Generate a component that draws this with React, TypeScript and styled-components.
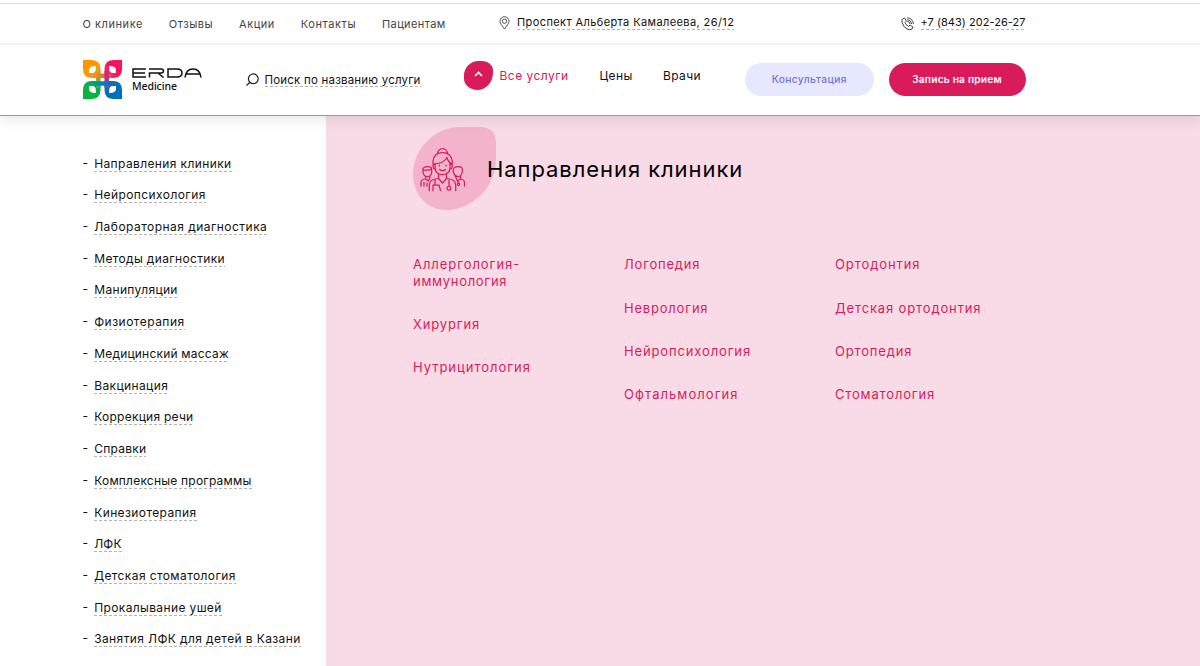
import React from "react";
import styled, { createGlobalStyle } from "styled-components";

const Global = createGlobalStyle`
  * { box-sizing: border-box; }
  body { margin: 0; background: #fff; overflow: hidden; font-family: Inter, "Open Sans", sans-serif; color: #111; }
  a { color: inherit; text-decoration: none; }
`;
const Page = styled.div`height: 666px; display: flex; flex-direction: column; overflow: hidden;`;
const TopBar = styled.div`
  margin-top: 3px; border-top: 1px solid #ddd; border-bottom: 2px solid #f3f3f3;
  display: flex; flex: none; height: 42px; padding-left: 82.5px; align-items: flex-start;
`;
const TopNav = styled.nav`display: flex; gap: 25.8px; width: 416.5px; padding-top: 12px;`;
const T = styled.a<{ $ls?: number }>`white-space: nowrap; letter-spacing: ${p => p.$ls ?? 0}px;`;
const TopLink = styled(T)`font-size: 11px; line-height: 16px; color: #444;`;
const Contact = styled.div<{ $w: number }>`
  display: flex; width: ${p => p.$w}px; padding-top: 11px; gap: 7px;
  svg { flex: none; }
`;
const dashed = `background: repeating-linear-gradient(90deg, #b4b4b4 0 3px, transparent 3px 5px) left bottom / 100% 1px no-repeat;`;
const ContactLink = styled(T)`font-size: 11px; line-height: 14px; height: 15px; ${dashed}`;
const Header = styled.header`
  height: 71px; flex: none; border-bottom: 1px solid #999; display: flex; padding-left: 82.5px;
  box-shadow: 0 3px 14px rgba(0,0,0,.1); clip-path: inset(0 0 -20px 0); position: relative; z-index: 1; background: #fff;
`;
const Logo = styled.div`display: flex; width: 163px; padding-top: 15px; gap: 10.5px;`;
const LogoText = styled.div`padding-top: 8px; width: 70px; svg { display: block; }`;
const Medicine = styled.div`font: 500 10.5px/14px "Noto Sans", sans-serif; margin-top: 1px; letter-spacing: -.1px;`;
const Search = styled.div`display: flex; width: 218.5px; gap: 6px; padding-top: 28px;`;
const SearchLink = styled(T)`font-size: 11.5px; line-height: 14px; height: 14px; ${dashed}`;
const Menu = styled.nav`display: flex; width: 281px; padding-top: 16px;`;
const Blob = styled.div`
  width: 29px; height: 29px; background: #da1b5b; border-radius: 55% 40% 60% 50% / 55% 35% 65% 45%;
  display: flex; align-items: center; justify-content: center; margin-right: 6.5px; padding-bottom: 3px;
`;
const MenuLink = styled(T)<{ $w: number; $on?: boolean }>`
  font-size: 12px; line-height: 29px; width: ${p => p.$w}px; color: ${p => (p.$on ? "#da1b5b" : "#111")};
`;
const Button = styled.button<{ $main?: boolean }>`
  border: 0; margin: 18px 15px 0 0; height: 33px; border-radius: 17px; width: ${p => (p.$main ? 137 : 128.5)}px;
  background: ${p => (p.$main ? "#da1b5b" : "#e6e8ff")}; color: ${p => (p.$main ? "#fff" : "#7674d8")};
  font: ${p => (p.$main ? 600 : 500)} 10.2px Inter, sans-serif; padding: 0 0 1px; white-space: nowrap; letter-spacing: ${p => (p.$main ? .2 : .4)}px;
`;
const Main = styled.main`display: flex; flex: 1;`;
const Side = styled.ul`width: 326px; margin: 0; padding: 31.6px 0 0 82.5px; list-style: none;`;
const SideItem = styled.li`
  height: 31.73px; display: flex; font-size: 12px; line-height: 17px; padding-top: 7px;
  &::before { content: "-"; width: 11.7px; line-height: 15px; }
`;
const SideLink = styled(T)`height: 17px; ${dashed}`;
const Panel = styled.section`flex: 1; background: #f9dbe7; padding: 11.4px 0 0 87px;`;
const Title = styled.div`display: flex; height: 84px;`;
const Badge = styled.div`width: 74px; svg { display: block; overflow: visible; }`;
const H1 = styled.h1`font-size: 22px; line-height: 32px; font-weight: 400; margin: 25.6px 0 0; color: #000; letter-spacing: .93px; position: relative;`;
const Columns = styled.div`display: flex; padding-top: 44.9px;`;
const Column = styled.div`width: 211px; display: flex; flex-direction: column; gap: 26.8px;`;
const ServiceItem = styled.div`display: flex; flex-direction: column;`;
const Service = styled(T)`font-size: 13px; line-height: 16.5px; color: #da1b5b;`;

const petals: [string, string][] = [
  ["petalOrange", ""],
  ["petalRed", "translate(39 0) scale(-1 1)"],
  ["petalBlue", "translate(39 39) scale(-1 -1)"],
  ["petalGreen", "translate(0 39) scale(1 -1)"],
];
const strandGradient = { gradientUnits: "userSpaceOnUse" as const };
const LogoMark = () => (
  <svg width="39" height="39" viewBox="0 0 39 39">
    <defs>
      <linearGradient id="petalOrange" x1="0" y1="0" x2="1" y2="1"><stop offset=".45" stopColor="#ff9800" /><stop offset="1" stopColor="#d5a52c" /></linearGradient>
      <linearGradient id="petalRed" x1="0" y1="0" x2="1" y2="1"><stop offset=".45" stopColor="#fa1060" /><stop offset="1" stopColor="#f04050" /></linearGradient>
      <linearGradient id="petalGreen" x1="0" y1="0" x2="1" y2="1"><stop offset=".45" stopColor="#08b43c" /><stop offset="1" stopColor="#089a80" /></linearGradient>
      <linearGradient id="petalBlue" x1="0" y1="0" x2="1" y2="1"><stop offset=".45" stopColor="#0070bd" /><stop offset="1" stopColor="#3468b4" /></linearGradient>
      <linearGradient id="strandLeft" {...strandGradient} x1="0" y1="9" x2="0" y2="30"><stop stopColor="#dfa428" /><stop offset="1" stopColor="#28ad48" /></linearGradient>
      <linearGradient id="strandRight" {...strandGradient} x1="0" y1="9" x2="0" y2="30"><stop stopColor="#f21a62" /><stop offset="1" stopColor="#6a58a8" /></linearGradient>
      <linearGradient id="strandTop" {...strandGradient} x1="9" y1="0" x2="29" y2="0"><stop stopColor="#f59b18" /><stop offset="1" stopColor="#f84050" /></linearGradient>
      <linearGradient id="strandBottom" {...strandGradient} x1="9" y1="0" x2="29" y2="0"><stop stopColor="#08a068" /><stop offset=".5" stopColor="#087fc0" /><stop offset="1" stopColor="#0070bd" /></linearGradient>
    </defs>
    {petals.map(([id, transform]) => (
      <path key={id} transform={transform} fillRule="evenodd" fill={`url(#${id})`} d="M0 0H8Q17.500 0 17.500 9V18H9Q0 18 0 9ZM6 13V10Q6 6 12.800 6V9Q12.800 13 9 13Z" />
    ))}
    <path d="M15.300 11V28" stroke="url(#strandLeft)" strokeWidth="4.500" />
    <path d="M11 15.800H28" stroke="url(#strandTop)" strokeWidth="4.500" />
    <path d="M23.700 11V28" stroke="url(#strandRight)" strokeWidth="4.500" />
    <path d="M11 23.500H28" stroke="url(#strandBottom)" strokeWidth="4.500" />
  </svg>
);
const Erda = () => (
  <svg width="70" height="10" viewBox="0 0 70 10" fill="none" stroke="#111" strokeWidth="1.500">
    <path d="M14 1H1V9H14M1 5H13" /><path d="M17.500 9.500V5H29Q31.500 5 31.500 3T29 1H17M26 5L31.500 9.500" />
    <path d="M36 1H45Q50 1 50 5T45 9H36Z" /><path d="M53 9.500Q54 1 61 1T69 9.500M54 6H68" />
  </svg>
);
const Pin = () => (
  <svg width="11" height="14" viewBox="0 0 11 14" fill="none" stroke="#444" strokeWidth=".9" style={{ marginTop: 1 }}>
    <path d="M5.500 13C3 9.500 1 7.500 1 5.200A4.500 4.500 0 0 1 10 5.200C10 7.500 8 9.500 5.500 13Z" /><circle cx="5.500" cy="5.200" r="2.200" />
  </svg>
);
const Phone = () => (
  <svg width="13" height="14" viewBox="0 0 13 14" fill="none" stroke="#333" strokeWidth=".9" style={{ marginTop: 2 }}>
    <path d="M1.500 2L3.500 1L5.500 4L4 5.500Q5 8 7.500 9.500L9 8L12 10L11 12Q9 13.500 6 12Q2 10 1 5Q.5 3 1.500 2Z" />
    <path d="M6.300 4.200Q8.600 4.600 9 7M6.200 2.500Q10 3 10.700 7M6.200 .8Q11.800 1.300 12.400 7" />
  </svg>
);
const Doctor = () => (
  <svg width="84" height="84" viewBox="0 0 84 84">
    <path fill="#f3b4cb" d="M47 0H68Q83 1 83 16V32C83 61 58 83 34 83C13 83 0 67 0 47C0 22 22 0 47 0Z" />
    <g fill="none" stroke="#da1b5b" strokeWidth="1.250" strokeLinecap="round" strokeLinejoin="round" transform="translate(8 20)">
      <path d="M16.500 6.500A5 4.800 0 1 1 26.500 6.500" />
      <path d="M12 17V14Q13 5.500 21.500 5.500T31.300 14V17M14 17Q23 16 26 10.500Q27 15 31 17" />
      <path d="M14 16V20Q14 27.500 21.500 27.500T29 20V16M14 17Q11.500 17 12 19.500T14 22M29 17Q31.800 17 31.300 19.500T29 22" />
      <path d="M18.500 22.500Q21.500 25 24.500 22.500M18.300 18V19M25 18V19" />
      <path d="M17.500 27V31.500L21.500 36L25.500 31.500V27" />
      <path d="M17.500 31.500Q8.300 32 8.300 38V43.700M25.500 31.500Q34.700 32 34.700 38V43.700M14 33V37.500M12 43.700V38H18L19.500 43.700M28 33V39" />
      <circle cx="28" cy="41.300" r="1.900" />
      <path d="M2 22.500Q2 19.500 6.500 19.500T10.700 22.500V25Q10.500 29.500 6.500 29.500T2 25ZM2.500 23H8L10.500 22M4.500 29V32L7.500 34L9 30M4 32Q0 32.500 0 36V39M3 35V39M6 36V39" />
      <path d="M32.300 22.500Q32.500 19.500 37 19.500T41.300 22.500V25Q40.500 29.500 37 29.500T32.300 25ZM34.500 29.500L36.500 34L39.500 32V29M39.500 32Q43.500 32.500 43.500 36V39M37 34V36" />
      <circle cx="37.500" cy="37.300" r="1.200" />
    </g>
  </svg>
);

const top: [string, number][] = [["О клинике", .55], ["Отзывы", .55], ["Акции", .55], ["Контакты", .6], ["Пациентам", .4]];
const side: [string, number][] = [
  ["Направления клиники", .38], ["Нейропсихология", .42], ["Лабораторная диагностика", .46], ["Методы диагностики", .35],
  ["Манипуляции", .35], ["Физиотерапия", .48], ["Медицинский массаж", .2], ["Вакцинация", .39], ["Коррекция речи", .25],
  ["Справки", .25], ["Комплексные программы", .21], ["Кинезиотерапия", .39], ["ЛФК", .2], ["Детская стоматология", .4],
  ["Прокалывание ушей", .37], ["Занятия ЛФК для детей в Казани", .39],
];
type Line = [string, number];
const columns: Line[][][] = [
  [[["Аллергология-", .96], ["иммунология", .7]], [["Хирургия", .84]], [["Нутрицитология", .98]]],
  [[["Логопедия", .81]], [["Неврология", .8]], [["Нейропсихология", .86]], [["Офтальмология", 1.06]]],
  [[["Ортодонтия", .9]], [["Детская ортодонтия", .86]], [["Ортопедия", .82]], [["Стоматология", .83]]],
];

export default function App() {
  return (
    <Page>
      <Global />
      <TopBar>
        <TopNav>{top.map(([t, l]) => <TopLink key={t} $ls={l}>{t}</TopLink>)}</TopNav>
        <Contact $w={401.5}><Pin /><ContactLink $ls={.4}>Проспект Альберта Камалеева, 26/12</ContactLink></Contact>
        <Contact $w={130}><Phone /><ContactLink $ls={.04}>+7 (843) 202-26-27</ContactLink></Contact>
      </TopBar>
      <Header>
        <Logo><LogoMark /><LogoText><Erda /><Medicine>Medicine</Medicine></LogoText></Logo>
        <Search>
          <svg width="13" height="13" viewBox="0 0 13 13" fill="none" stroke="#222" strokeWidth="1.200"><circle cx="7.300" cy="5.800" r="4.900" /><path d="M4 9.300L.5 12.500" /></svg>
          <SearchLink $ls={.2}>Поиск по названию услуги</SearchLink>
        </Search>
        <Menu>
          <Blob><svg width="9" height="6" viewBox="0 0 9 6" fill="none" stroke="#fff" strokeWidth="1.600"><path d="M1 5L4.500 1.500L8 5" /></svg></Blob>
          <MenuLink $w={100} $on $ls={.47}>Все услуги</MenuLink><MenuLink $w={63.5} $ls={.4}>Цены</MenuLink><MenuLink $w={60} $ls={.4}>Врачи</MenuLink>
        </Menu>
        <Button>Консультация</Button><Button $main>Запись на прием</Button>
      </Header>
      <Main>
        <Side>{side.map(([t, l]) => <SideItem key={t}><SideLink $ls={l}>{t}</SideLink></SideItem>)}</Side>
        <Panel>
          <Title><Badge><Doctor /></Badge><H1>Направления клиники</H1></Title>
          <Columns>
            {columns.map((column, i) => (
              <Column key={i}>
                {column.map(lines => (
                  <ServiceItem key={lines[0][0]}>{lines.map(([t, l]) => <Service key={t} $ls={l}>{t}</Service>)}</ServiceItem>
                ))}
              </Column>
            ))}
          </Columns>
        </Panel>
      </Main>
    </Page>
  );
}
